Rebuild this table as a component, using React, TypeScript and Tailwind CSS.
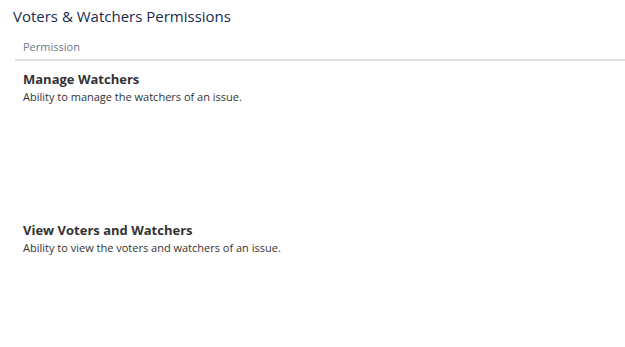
const permissions = [
  {
    name: 'Manage Watchers',
    description: 'Ability to manage the watchers of an issue.',
  },
  {
    name: 'View Voters and Watchers',
    description: 'Ability to view the voters and watchers of an issue.',
  },
];

export default function App() {
  return (
    <div className="w-[625px] h-[347px] bg-white overflow-hidden font-['Open_Sans',sans-serif] text-[#333333]">
      <h2 className="pl-[13px] pt-[5px] text-[15px] leading-[22px] font-normal text-[#172b4d]">
        Voters &amp; Watchers Permissions
      </h2>
      <table className="ml-[15px] mt-[5px] w-[610px] border-collapse">
        <thead>
          <tr className="border-b-2 border-[#dfe1e6]">
            <th className="px-2 pt-[5px] pb-[2px] text-left text-[11px] leading-[20px] font-normal text-[#6b778c]">
              Permission
            </th>
          </tr>
        </thead>
        <tbody>
          {permissions.map((p) => (
            <tr key={p.name}>
              <td className="px-2 pt-[9px] h-[152px] align-top">
                <div className="text-[13px] leading-[18px] font-bold">{p.name}</div>
                <div className="text-[11px] leading-[18px]">{p.description}</div>
              </td>
            </tr>
          ))}
        </tbody>
      </table>
    </div>
  );
}
